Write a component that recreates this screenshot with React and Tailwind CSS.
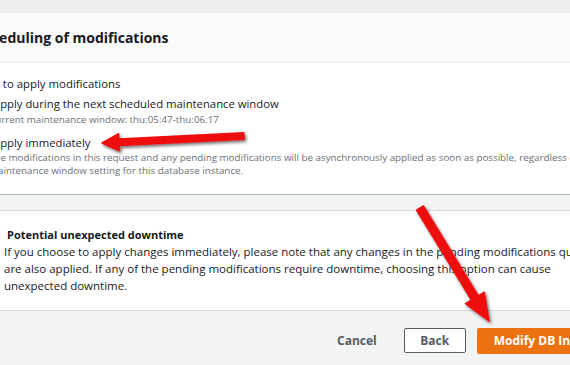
const arrowPoints = (tx, ty, px, py, headLen, headHalf, shaftHalf) => {
    const dx = px - tx;
    const dy = py - ty;
    const len = Math.hypot(dx, dy);
    const ux = dx / len;
    const uy = dy / len;
    const nx = -uy;
    const ny = ux;
    const neckX = px - ux * headLen;
    const neckY = py - uy * headLen;
    const pts = [
        [tx + nx * shaftHalf, ty + ny * shaftHalf],
        [neckX + nx * shaftHalf, neckY + ny * shaftHalf],
        [neckX + nx * headHalf, neckY + ny * headHalf],
        [px, py],
        [neckX - nx * headHalf, neckY - ny * headHalf],
        [neckX - nx * shaftHalf, neckY - ny * shaftHalf],
        [tx - nx * shaftHalf, ty - ny * shaftHalf],
    ];
    return pts.map((p) => p.map((v) => v.toFixed(1)).join(',')).join(' ');
};

function Radio({ checked }) {
    return (
        <span
            className={`mt-[1px] flex h-[14px] w-[14px] shrink-0 items-center justify-center rounded-full border-2 ${
                checked ? 'border-[#0073bb]' : 'border-[#aab7b8]'
            } bg-white`}
        >
            {checked && <span className="h-[6px] w-[6px] rounded-full bg-[#0073bb]" />}
        </span>
    );
}

export default function App() {
    return (
        <div
            className="relative h-[365px] w-[570px] overflow-hidden bg-[#f2f3f3] text-[#16191f]"
            style={{ fontFamily: '"Open Sans", "Noto Sans", sans-serif' }}
        >
            <div className="h-[13px] bg-[#eceeee]" />

            <section className="-ml-[40px] w-[1000px] border-b border-[#aab7b8] bg-white">
                <div className="flex h-[50px] items-center border-b border-[#eaeded] bg-[#fafafa] pl-[15px]">
                    <h2 className="text-[14px] font-bold leading-[20px]">Scheduling of modifications</h2>
                </div>

                <div className="pl-[9px] pt-[13px] pb-[17px]">
                    <p className="text-[11.4px] leading-[16px]">When to apply modifications</p>

                    <div className="mt-[4px] flex gap-[10px]">
                        <Radio />
                        <div>
                            <p className="text-[11.3px] leading-[16px]">Apply during the next scheduled maintenance window</p>
                            <p className="-ml-[4px] text-[9.8px] leading-[15px] text-[#687078]">
                                Current maintenance window: thu:05:47-thu:06:17
                            </p>
                        </div>
                    </div>

                    <div className="mt-[8px] flex gap-[10px]">
                        <Radio checked />
                        <div>
                            <p className="text-[11.3px] leading-[16px]">Apply immediately</p>
                            <p className="-ml-[4px] whitespace-nowrap text-[9.8px] leading-[13px] text-[#687078]">
                                The modifications in this request and any pending modifications will be asynchronously
                                applied as soon as possible, regardless of the
                                <br />
                                maintenance window setting for this database instance.
                            </p>
                        </div>
                    </div>
                </div>
            </section>

            <div className="mt-[15px] w-[1000px] border-t border-[#d5dbdb] bg-white pl-[4px] pt-[16px] pb-[16px]">
                <p className="pl-[3px] text-[11px] font-bold leading-[16px]">Potential unexpected downtime</p>
                <p className="whitespace-nowrap text-[11.5px] leading-[17px]">
                    If you choose to apply changes immediately, please note that any changes in the pending modifications queue
                    <br />
                    are also applied. If any of the pending modifications require downtime, choosing this option can cause
                    <br />
                    unexpected downtime.
                </p>
            </div>

            <div className="flex items-start border-t border-[#d5dbdb] pt-[17px] pl-[322px]">
                <button className="h-[25px] shrink-0 px-[15px] text-[12px] font-bold text-[#545b64]">Cancel</button>
                <button className="ml-[12px] h-[25px] w-[62px] shrink-0 rounded-[2px] border border-[#545b64] bg-white text-[12px] font-bold text-[#545b64]">
                    Back
                </button>
                <button className="ml-[11px] h-[26px] shrink-0 whitespace-nowrap rounded-[2px] bg-[#ec7211] px-[17px] text-[12px] font-bold text-white">
                    Modify DB Instance
                </button>
            </div>

            <svg className="pointer-events-none absolute inset-0" width="570" height="365">
                <defs>
                    <filter id="shadow" x="-20%" y="-20%" width="140%" height="140%">
                        <feDropShadow dx="1.5" dy="2" stdDeviation="1.5" floodColor="#000" floodOpacity="0.55" />
                    </filter>
                </defs>
                <g filter="url(#shadow)" fill="#ee1010" strokeLinejoin="round" stroke="#ee1010" strokeWidth="1.5">
                    <polygon points={arrowPoints(244, 136, 102, 143, 17, 8.5, 3.2)} />
                    <polygon points={arrowPoints(420, 208, 489, 321, 27, 11, 4)} />
                </g>
            </svg>
        </div>
    );
}
